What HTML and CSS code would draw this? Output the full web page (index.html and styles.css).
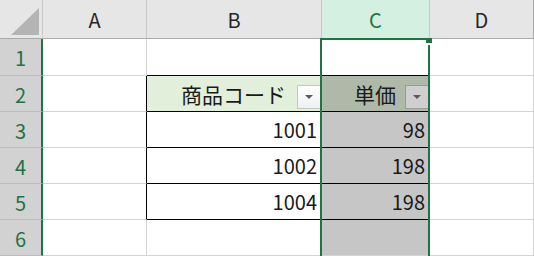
FILE: index.html
```html
<!DOCTYPE html>
<html lang="ja">
<head>
<meta charset="utf-8">
<title>Sheet1</title>
<link rel="stylesheet" href="styles.css">
</head>
<body>
<div class="sheet">
  <div class="corner">
    <svg width="42" height="38" viewBox="0 0 42 38"><polygon points="39,8 39,35 11,35" fill="#b4b4b4"/></svg>
  </div>
  <div class="colhead">A</div>
  <div class="colhead">B</div>
  <div class="colhead colhead-active">C</div>
  <div class="colhead colhead-last">D</div>

  <div class="rowhead">1</div>
  <div class="cell"></div>
  <div class="cell table-top"></div>
  <div class="cell table-top"></div>
  <div class="cell cell-last"></div>

  <div class="rowhead">2</div>
  <div class="cell table-left"></div>
  <div class="cell table head-cell">商品コード<span class="filter"><i></i></span></div>
  <div class="cell table head-cell head-sel">単価<span class="filter filter-sel"><i></i></span></div>
  <div class="cell cell-last"></div>

  <div class="rowhead">3</div>
  <div class="cell table-left"></div>
  <div class="cell table num">1001</div>
  <div class="cell table num sel">98</div>
  <div class="cell cell-last"></div>

  <div class="rowhead">4</div>
  <div class="cell table-left"></div>
  <div class="cell table num">1002</div>
  <div class="cell table num sel">198</div>
  <div class="cell cell-last"></div>

  <div class="rowhead">5</div>
  <div class="cell table-left"></div>
  <div class="cell table num">1004</div>
  <div class="cell table num sel">198</div>
  <div class="cell cell-last"></div>

  <div class="rowhead">6</div>
  <div class="cell"></div>
  <div class="cell"></div>
  <div class="cell sel"></div>
  <div class="cell cell-last"></div>

  <div class="selection"><span class="handle"></span></div>
</div>
</body>
</html>
```

FILE: styles.css
```css
html, body {
  margin: 0;
  padding: 0;
  background: #ffffff;
}

.sheet {
  position: relative;
  display: grid;
  grid-template-columns: 43px 104px 175px 108px 104px;
  grid-template-rows: 39px 37px repeat(5, 36px);
  width: 534px;
  height: 256px;
  overflow: hidden;
  font-family: "Noto Sans CJK JP", "Noto Sans", sans-serif;
  font-size: 20px;
  color: #1a1a1a;
}

.sheet > div {
  box-sizing: border-box;
}

.corner {
  background: #e6e6e6;
  border-right: 1px solid #c8c8c8;
  border-bottom: 1px solid #a9a9a9;
}

.corner svg {
  display: block;
}

.colhead {
  display: flex;
  align-items: center;
  justify-content: center;
  background: #e6e6e6;
  border-right: 1px solid #c8c8c8;
  border-bottom: 1px solid #a9a9a9;
  color: #262626;
  padding-top: 1px;
}

.colhead-active {
  background: #d3f0e0;
  color: #217346;
  border-bottom-color: #217346;
}

.colhead-last {
  border-right-color: #a9a9a9;
}

.rowhead {
  display: flex;
  align-items: center;
  justify-content: center;
  background: #d2d2d2;
  border-right: 2px solid #217346;
  border-bottom: 1px solid #bdbdbd;
  color: #217346;
  padding-top: 1px;
}

.cell {
  position: relative;
  display: flex;
  align-items: center;
  border-right: 1px solid #d4d4d4;
  border-bottom: 1px solid #d4d4d4;
}

.cell-last {
  border-right-color: #d4d4d4;
}

.table-top {
  border-bottom-color: #000000;
}

.table-left {
  border-right-color: #000000;
}

.table {
  border-right-color: #000000;
  border-bottom-color: #000000;
}

.head-cell {
  justify-content: center;
  background: #e2efda;
  padding-right: 1px;
  font-size: 21px;
}

.head-sel {
  background: #aeb9a9;
}

.num {
  justify-content: flex-end;
  padding-right: 4px;
}

.sel {
  background: #c6c6c6;
}

.filter {
  position: absolute;
  right: 0;
  top: 9px;
  box-sizing: border-box;
  width: 24px;
  height: 24px;
  display: flex;
  align-items: center;
  justify-content: center;
  border: 1px solid #c6c6c6;
  background: linear-gradient(#ffffff, #eef0f3);
}

.filter i {
  display: block;
  width: 0;
  height: 0;
  border-left: 4px solid transparent;
  border-right: 4px solid transparent;
  border-top: 4px solid #595959;
}

.filter-sel {
  border-color: #9a9a9a;
  background: #cfcfcf;
}

.selection {
  position: absolute;
  left: 320px;
  top: 38px;
  width: 110px;
  height: 240px;
  box-sizing: border-box;
  border: 2px solid #217346;
  border-bottom: none;
}

.handle {
  position: absolute;
  left: 104px;
  top: -2px;
  width: 6px;
  height: 5px;
  background: #217346;
  border-bottom: 2px solid #ffffff;
}
```
